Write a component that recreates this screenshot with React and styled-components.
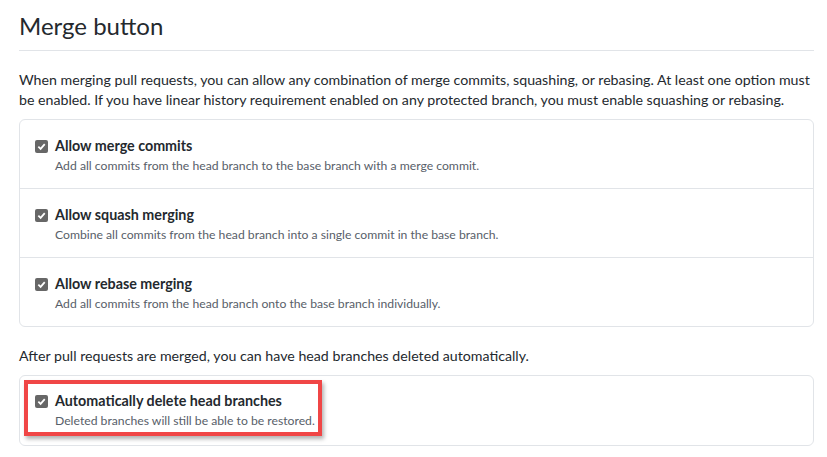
import React from 'react';
import styled, { createGlobalStyle } from 'styled-components';

const GlobalStyle = createGlobalStyle`
  html, body {
    margin: 0;
    padding: 0;
    background: #fff;
  }
  body {
    font-family: Lato, 'Noto Sans', 'Liberation Sans', sans-serif;
    color: #24292e;
  }
`;

const Page = styled.div`
  width: 795px;
  padding: 10px 0 0 19px;
`;

const Heading = styled.h2`
  margin: 0;
  font-size: 24px;
  font-weight: 400;
  line-height: 32px;
  padding-bottom: 8px;
  border-bottom: 1px solid #e1e4e8;
`;

const Text = styled.p`
  margin: 19px 0 9px;
  font-size: 14.2px;
  line-height: 20px;
`;

const Box = styled.div`
  border: 1px solid #e1e4e8;
  border-radius: 6px;
`;

const Row = styled.div`
  padding: 16px 15px 12px;
  & + & {
    border-top: 1px solid #e1e4e8;
  }
`;

const Highlight = styled.div`
  width: fit-content;
  margin: 4px 0 9px 4px;
  padding: 7px 3px 1px 7px;
  border: 4px solid #f04646;
  box-shadow: 2px 3px 4px rgba(0, 0, 0, 0.3);
`;

const Label = styled.label`
  display: flex;
  align-items: center;
  gap: 7px;
  font-size: 14.3px;
  font-weight: 700;
  line-height: 20px;
`;

const Check = styled.span`
  width: 13px;
  height: 13px;
  border-radius: 2px;
  background: #676767;
  display: inline-flex;
  align-items: center;
  justify-content: center;
  flex: none;
`;

const Note = styled.div`
  margin: 0 0 0 20px;
  font-size: 12.2px;
  line-height: 20px;
  color: #586069;
`;

function Checkbox() {
  return (
    <Check>
      <svg width="9" height="9" viewBox="0 0 10 10">
        <path d="M1.5 5.2 L4 7.6 L8.6 2.4" fill="none" stroke="#fff" strokeWidth="2" />
      </svg>
    </Check>
  );
}

function Option({ title, note }) {
  return (
    <>
      <Label>
        <Checkbox />
        {title}
      </Label>
      <Note>{note}</Note>
    </>
  );
}

const options = [
  ['Allow merge commits', 'Add all commits from the head branch to the base branch with a merge commit.'],
  ['Allow squash merging', 'Combine all commits from the head branch into a single commit in the base branch.'],
  ['Allow rebase merging', 'Add all commits from the head branch onto the base branch individually.'],
];

export default function App() {
  return (
    <Page>
      <GlobalStyle />
      <Heading>Merge button</Heading>
      <Text>
        When merging pull requests, you can allow any combination of merge commits, squashing, or rebasing. At least one option must
        be enabled. If you have linear history requirement enabled on any protected branch, you must enable squashing or rebasing.
      </Text>
      <Box>
        {options.map(([t, n]) => (
          <Row key={t}>
            <Option title={t} note={n} />
          </Row>
        ))}
      </Box>
      <Text>After pull requests are merged, you can have head branches deleted automatically.</Text>
      <Box>
        <Highlight>
          <Option title="Automatically delete head branches" note="Deleted branches will still be able to be restored." />
        </Highlight>
      </Box>
    </Page>
  );
}
